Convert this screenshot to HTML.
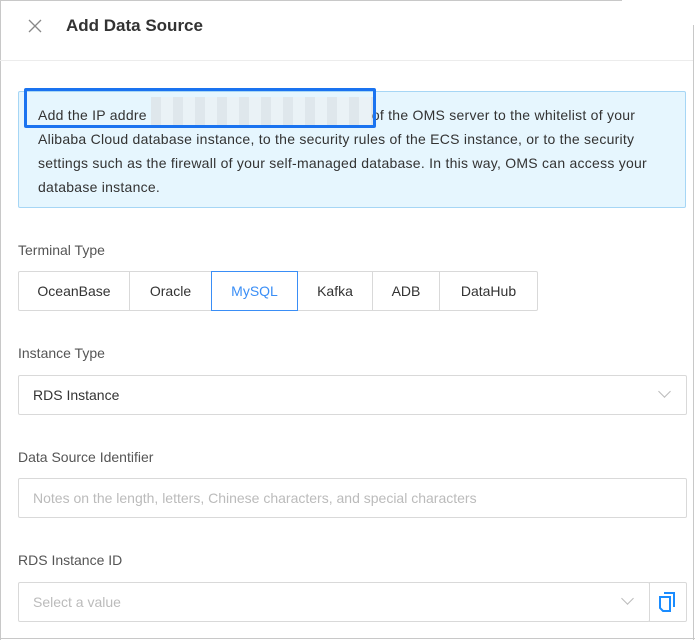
<!DOCTYPE html>
<html><head><style>
*{box-sizing:border-box;margin:0;padding:0}
body{width:695px;height:640px;background:#fff;font-family:"Liberation Sans",sans-serif;color:#333;position:relative;overflow:hidden}
.abs{position:absolute}
.lbl{position:absolute;left:18px;font-size:14px;color:#555}
.inp{position:absolute;left:18px;height:40px;border:1px solid #d9d9d9;border-radius:2px;font-size:14px;padding:0 14px;line-height:38px}
.chev{position:absolute;width:9px;height:9px;border-right:1.3px solid #bbb;border-bottom:1.3px solid #bbb;transform:rotate(45deg)}
.btn{position:absolute;top:271px;height:40px;border:1px solid #d9d9d9;font-size:14px;line-height:38px;text-align:center;color:#333}
</style></head><body>
<div class="abs" style="left:0;top:0;width:622px;height:1px;background:#c8c8c8"></div>
<div class="abs" style="left:0;top:0;width:1px;height:640px;background:#c8c8c8"></div>
<div class="abs" style="left:693px;top:25px;width:1px;height:615px;background:#c8c8c8"></div>
<div class="abs" style="left:0;top:638px;width:695px;height:1px;background:#c8c8c8"></div>
<svg class="abs" style="left:28px;top:19px" width="14" height="14" viewBox="0 0 14 14"><path d="M1 1L13 13M13 1L1 13" stroke="#888" stroke-width="1.3"/></svg>
<div class="abs" style="left:66px;top:16px;font-size:17px;font-weight:bold;color:#333">Add Data Source</div>
<div class="abs" style="left:0;top:60px;width:693px;height:1px;background:#ececec"></div>
<div class="abs" style="left:18px;top:91px;width:668px;height:117px;background:#e6f6fe;border:1px solid #a6d6f5;border-radius:2px"></div>
<div class="abs" style="left:151px;top:97px;width:222px;height:28px;background:repeating-linear-gradient(90deg,#dfe7ec 0 10px,#eaf2f6 10px 22px)"></div>
<div class="abs" style="left:38px;top:103px;width:660px;font-size:14px;line-height:24px;color:#333;letter-spacing:0.25px;white-space:nowrap">Add the IP addre<span style="display:inline-block;width:225px"></span>of the OMS server to the whitelist of your<br>Alibaba Cloud database instance, to the security rules of the ECS instance, or to the security<br>settings such as the firewall of your self-managed database. In this way, OMS can access your<br>database instance.</div>
<div class="abs" style="left:24px;top:88px;width:352px;height:40px;border:3px solid #1a73f0;border-radius:2px"></div>
<div class="lbl" style="top:242px">Terminal Type</div>
<div class="btn" style="left:18px;width:112px;border-radius:2px 0 0 2px">OceanBase</div>
<div class="btn" style="left:129px;width:83px">Oracle</div>
<div class="btn" style="left:211px;width:87px;border-color:#3a8ef6;color:#3a8ef6;z-index:2">MySQL</div>
<div class="btn" style="left:297px;width:76px">Kafka</div>
<div class="btn" style="left:372px;width:68px">ADB</div>
<div class="btn" style="left:439px;width:99px;border-radius:0 2px 2px 0">DataHub</div>
<div class="lbl" style="top:345px">Instance Type</div>
<div class="inp" style="top:375px;width:669px;color:#333">RDS Instance</div>
<div class="chev" style="left:660px;top:387px"></div>
<div class="lbl" style="top:449px">Data Source Identifier</div>
<div class="inp" style="top:478px;width:669px;color:#bbb">Notes on the length, letters, Chinese characters, and special characters</div>
<div class="lbl" style="top:552px">RDS Instance ID</div>
<div class="inp" style="top:582px;width:632px;color:#bbb">Select a value</div>
<div class="chev" style="left:623px;top:594px"></div>
<div class="abs" style="left:649px;top:582px;width:38px;height:40px;border:1px solid #d9d9d9;border-radius:0 2px 2px 0"></div>
<svg class="abs" style="left:658px;top:591px" width="20" height="22" viewBox="0 0 20 22"><path d="M6 2h10v14" fill="none" stroke="#1a8cff" stroke-width="2"/><path d="M2 6h10v14H5l-3-3z" fill="none" stroke="#1a8cff" stroke-width="2"/></svg>
</body></html>
